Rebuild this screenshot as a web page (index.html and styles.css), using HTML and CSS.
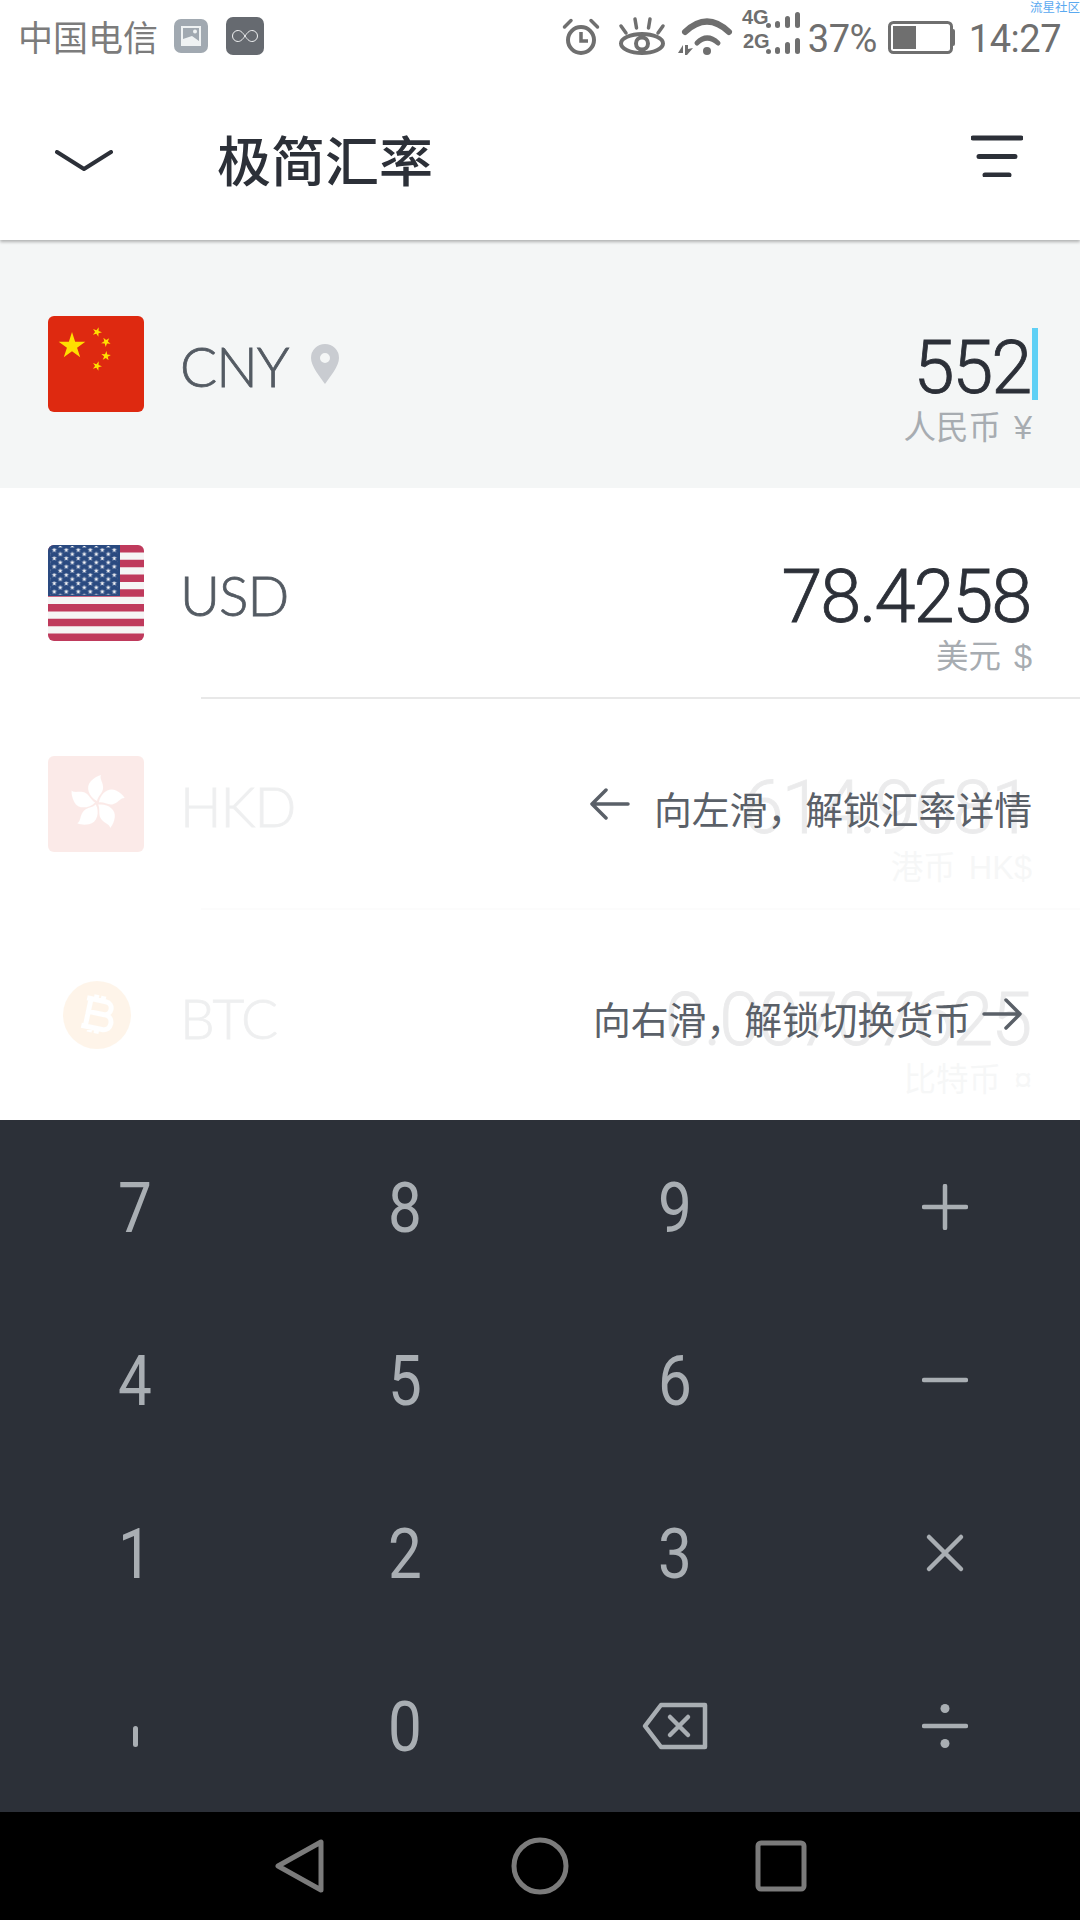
FILE: index.html
```html
<!DOCTYPE html>
<html lang="zh-CN">
<head>
  <meta charset="UTF-8">
  <meta name="viewport" content="width=device-width, initial-scale=1.0">
  <title>极简汇率</title>
  <link rel="stylesheet" href="styles.css">
</head>
<body>

<div class="screen">
  <header class="top">
    <div class="statusbar">
      <span class="carrier">中国电信</span>
      <span class="note note-pic">
        <svg width="22" height="22" viewBox="0 0 22 22"><path d="M1 1h20v20H1z" fill="#eff2f3"/><path d="M3 3h16v13L12 11 3 14z" fill="#a1a9b1"/><circle cx="15" cy="6.5" r="2" fill="#eff2f3"/></svg>
      </span>
      <span class="note note-inf">
        <svg width="26" height="14" viewBox="0 0 26 14"><path d="M13 7C10 2.5 8 1.5 6 1.5a5.5 5.5 0 0 0 0 11c2 0 4-1 7-5.500s5-5.500 7-5.500a5.500 5.500 0 0 1 0 11c-2 0-4-1-7-5.500z" fill="none" stroke="#f2f3f4" stroke-width="1"/></svg>
      </span>

      <div class="status-right">
        <svg class="ic-alarm" width="36" height="37" viewBox="0 0 36 37" fill="none" stroke="#6f6f6f" stroke-width="4"><circle cx="18" cy="22" r="13"/><path d="M18 14v9h7" stroke-width="3.500"/><path d="M1.500 9 8 2.500M34.500 9 28 2.500" stroke-width="3.500" stroke-linecap="round"/></svg>
        <svg class="ic-eye" width="46" height="37" viewBox="0 0 46 37" fill="none" stroke="#6f6f6f" stroke-width="4"><ellipse cx="23" cy="25.500" rx="21" ry="9.500"/><circle cx="23" cy="25.500" r="6"/><path d="M2 8l5 7M16 1l1.500 9M31 1l-1.500 9M44 8l-5 7" stroke-width="3.500" stroke-linecap="round"/></svg>
        <svg class="ic-wifi" width="54" height="37" viewBox="0 0 54 37" fill="none" stroke="#6f6f6f" stroke-linecap="round"><path d="M7 14Q29-7 51 14" stroke-width="6"/><path d="M19 25Q29 15 40 25" stroke-width="5"/><circle cx="29" cy="33" r="4" fill="#6f6f6f" stroke="none"/><path d="M0 35l5-8v8zM7 27h3v4l5-1-6 7h-2z" fill="#6f6f6f" stroke="none"/></svg>
        <svg class="ic-net" width="60" height="48" viewBox="0 0 60 48" fill="#6f6f6f">
          <text x="0" y="16" class="net-label">4G</text>
          <text x="1" y="40" class="net-label">2G</text>
          <rect x="24" y="15" width="5" height="5" rx="2.500"/><rect x="33" y="13" width="5" height="7" rx="2.500"/><rect x="43" y="8" width="5" height="12" rx="2.500"/><rect x="53" y="4" width="5" height="16" rx="2.500"/>
          <rect x="24" y="41" width="5" height="5" rx="2.500"/><rect x="33" y="39" width="5" height="7" rx="2.500"/><rect x="43" y="34" width="5" height="12" rx="2.500"/><rect x="53" y="30" width="5" height="16" rx="2.500"/>
        </svg>
        <span class="pct">37%</span>
        <svg class="ic-batt" width="67" height="33" viewBox="0 0 67 33"><rect x="1.500" y="1.500" width="62" height="30" rx="4" fill="none" stroke="#6f6f6f" stroke-width="3"/><rect x="5" y="5" width="23" height="23" fill="#6f6f6f"/><path d="M64 8h1a2 2 0 0 1 2 2v13a2 2 0 0 1-2 2h-1z" fill="#6f6f6f"/></svg>
        <span class="clock">14:27</span>
      </div>
      <span class="watermark">流星社区</span>
    </div>

    <div class="toolbar">
      <svg class="ic-chevron" width="58" height="22" viewBox="0 0 58 22" fill="none" stroke="#2c3038" stroke-width="4" stroke-linecap="round" stroke-linejoin="round"><path d="M2 2l27 17L56 2"/></svg>
      <h1 class="title">极简汇率</h1>
      <svg class="ic-filter" width="52" height="42" viewBox="0 0 52 42" fill="none" stroke="#2c3038" stroke-width="5" stroke-linecap="round"><path d="M2 3h48M8 21.500h36M14 40h24"/></svg>
    </div>
  </header>

  <main class="list">
    <section class="row row-active">
      <svg class="flag" width="96" height="96" viewBox="0 0 96 96">
        <rect width="96" height="96" fill="#de2910"/>
        <defs><polygon id="star" points="0,-1 .225,-.309 .951,-.309 .363,.118 .588,.809 0,.382 -.588,.809 -.363,.118 -.951,-.309 -.225,-.309"/></defs>
        <g fill="#ffde00">
          <use href="#star" transform="translate(24 30) scale(14)"/>
          <use href="#star" transform="translate(49 16) rotate(20) scale(5)"/>
          <use href="#star" transform="translate(58 26) rotate(40) scale(5)"/>
          <use href="#star" transform="translate(58 40) rotate(5) scale(5)"/>
          <use href="#star" transform="translate(49 50) rotate(20) scale(5)"/>
        </g>
      </svg>
      <span class="code">CNY</span>
      <svg class="ic-pin" width="28" height="40" viewBox="0 0 28 40"><path fill-rule="evenodd" d="M14 0a14 14 0 0 1 14 14c0 8-9 19-14 26C9 33 0 22 0 14A14 14 0 0 1 14 0zm0 9a5 5 0 1 0 0 10 5 5 0 0 0 0-10z" fill="#c9ccd1"/></svg>
      <div class="amount">
        <div class="value">552<span class="caret"></span></div>
        <div class="name">人民币 ¥</div>
      </div>
    </section>

    <section class="row row-usd">
      <svg class="flag" width="96" height="96" viewBox="0 0 96 96">
        <defs>
          <pattern id="stars" x="3.300" y="2.900" width="12" height="8.340" patternUnits="userSpaceOnUse">
            <polygon fill="#f4f4f6" transform="translate(3 2.100) scale(2.800)" points="0,-1 .225,-.309 .951,-.309 .363,.118 .588,.809 0,.382 -.588,.809 -.363,.118 -.951,-.309 -.225,-.309"/>
            <polygon fill="#f4f4f6" transform="translate(9 6.270) scale(2.800)" points="0,-1 .225,-.309 .951,-.309 .363,.118 .588,.809 0,.382 -.588,.809 -.363,.118 -.951,-.309 -.225,-.309"/>
          </pattern>
        </defs>
        <rect width="96" height="96" fill="#f5f5f5"/>
        <path d="M0 0h96v7.400H0zM0 14.800h96v7.400H0zM0 29.500h96v7.400H0zM0 44.300h96v7.400H0zM0 59.100h96v7.400H0zM0 73.800h96v7.400H0zM0 88.600h96V96H0z" fill="#bf3a5c"/>
        <rect width="72" height="51" fill="#2a4a80"/>
        <rect x="2" y="1" width="68" height="49" fill="url(#stars)"/>
      </svg>
      <span class="code">USD</span>
      <div class="amount">
        <div class="value">78.4258</div>
        <div class="name">美元 $</div>
      </div>
    </section>

    <section class="row row-hkd">
      <div class="fade">
        <svg class="flag" width="96" height="96" viewBox="0 0 96 96">
          <rect width="96" height="96" fill="#de2910"/>
          <defs><path id="petal" d="M0-2C-8-6-12-16-6-22-3-25 0-27 4-28 2-24 7-20 6-14 5-9 1-7 0-2z"/></defs>
          <g fill="#fff" transform="translate(49 47)">
            <use href="#petal"/>
            <use href="#petal" transform="rotate(72)"/>
            <use href="#petal" transform="rotate(144)"/>
            <use href="#petal" transform="rotate(216)"/>
            <use href="#petal" transform="rotate(288)"/>
          </g>
        </svg>
        <span class="code">HKD</span>
        <div class="amount">
          <div class="value">614.9681</div>
          <div class="name">港币 HK$</div>
        </div>
      </div>
      <div class="hint hint-left">
        <svg width="40" height="32" viewBox="0 0 40 32" fill="none" stroke="#5a6068" stroke-width="3.500" stroke-linecap="round" stroke-linejoin="round"><path d="M38 16H3M16 2 2 16l14 14"/></svg>
        <span>向左滑，解锁汇率详情</span>
      </div>
      <div class="row-line"></div>
    </section>

    <section class="row row-btc">
      <div class="fade">
        <svg class="flag" width="96" height="96" viewBox="0 0 96 96">
          <circle cx="49" cy="47" r="34" fill="#f7931a"/>
          <path d="M40 32h15c9 0 9 13 0 13H40zM40 45h17c10 0 10 15 0 15H40zM36 32h6M36 60h6M45 27v5M52 27v5M45 60v5M52 60v5" fill="none" stroke="#fff" stroke-width="5" transform="rotate(12 48 46)"/>
        </svg>
        <span class="code">BTC</span>
        <div class="amount">
          <div class="value">0.00707625</div>
          <div class="name">比特币 ¤</div>
        </div>
      </div>
      <div class="hint hint-right">
        <span>向右滑，解锁切换货币</span>
        <svg width="40" height="32" viewBox="0 0 40 32" fill="none" stroke="#5a6068" stroke-width="3.500" stroke-linecap="round" stroke-linejoin="round"><path d="M2 16h35M24 2l14 14-14 14"/></svg>
      </div>
    </section>
  </main>

  <div class="keypad">
    <button class="key num">7</button>
    <button class="key num">8</button>
    <button class="key num">9</button>
    <button class="key"><svg width="46" height="46" viewBox="0 0 46 46" class="op"><path d="M2 23h42M23 2v42"/></svg></button>
    <button class="key num">4</button>
    <button class="key num">5</button>
    <button class="key num">6</button>
    <button class="key"><svg width="46" height="46" viewBox="0 0 46 46" class="op"><path d="M2 23h42"/></svg></button>
    <button class="key num">1</button>
    <button class="key num">2</button>
    <button class="key num">3</button>
    <button class="key"><svg width="46" height="46" viewBox="0 0 46 46" class="op"><path d="M7 7l32 32M39 7 7 39"/></svg></button>
    <button class="key"><span class="sep"></span></button>
    <button class="key num">0</button>
    <button class="key"><svg width="66" height="48" viewBox="0 0 66 48" class="op"><path d="M19 3h44v42H19L3 24z" stroke-linejoin="round"/><path d="M28 15l18 18M46 15 28 33"/></svg></button>
    <button class="key"><svg width="46" height="50" viewBox="0 0 46 50" class="op"><path d="M2 25h42"/><circle cx="23" cy="7.500" r="4.500" class="op-dot"/><circle cx="23" cy="42.500" r="4.500" class="op-dot"/></svg></button>
  </div>

  <nav class="navbar">
    <svg width="50" height="56" viewBox="0 0 50 56" class="nav-ic"><path d="M46 4v48L3 28z" stroke-linejoin="round"/></svg>
    <svg width="58" height="58" viewBox="0 0 58 58" class="nav-ic"><circle cx="29" cy="29" r="26"/></svg>
    <svg width="52" height="52" viewBox="0 0 52 52" class="nav-ic"><rect x="3" y="3" width="46" height="46" rx="3"/></svg>
  </nav>
</div>

</body>
</html>
```

FILE: styles.css
```css
:root {
  --ink: #2c3038;
  --code: #545b63;
  --muted: #a7acb1;
  --status: #6f6f6f;
  --key: #a9aeb3;
}
* { box-sizing: border-box; }
html, body {
  margin: 0;
  padding: 0;
  background: #fff;
}
body {
  font-family: "Noto Sans CJK SC", "Noto Sans", sans-serif;
  color: var(--ink);
}
.screen {
  width: 1080px;
  height: 1920px;
  display: flex;
  flex-direction: column;
  overflow: hidden;
}

/* status bar + toolbar */
.top {
  height: 240px;
  background: #fff;
  box-shadow: 0 2px 3px rgba(0,0,0,0.28);
  position: relative;
  z-index: 2;
}
.statusbar {
  height: 72px;
  padding: 0 19px 0 18px;
  display: flex;
  align-items: center;
  position: relative;
}
.carrier {
  font-size: 35px;
  line-height: 72px;
  color: #7c7c7c;
  width: 140px;
  white-space: nowrap;
}
.note {
  display: flex;
  align-items: center;
  justify-content: center;
}
.note-pic {
  width: 34px;
  height: 34px;
  margin-left: 16px;
  border-radius: 7px;
  background: #a1a9b1;
}
.note-inf {
  width: 38px;
  height: 38px;
  margin-left: 18px;
  border-radius: 7px;
  background: #666a70;
}
.status-right {
  margin-left: auto;
  display: flex;
  align-items: center;
  height: 72px;
}
.status-right svg { display: block; overflow: visible; }
.ic-eye { margin-left: 20px; }
.ic-wifi { margin-left: 13px; }
.ic-net { margin-left: 10px; margin-top: -8px; }
.ic-batt { margin-left: 11px; margin-top: 3px; }
.net-label {
  font-family: "Liberation Sans", sans-serif;
  font-size: 20px;
  font-weight: 700;
}
.pct, .clock {
  font-family: "Roboto", sans-serif;
  font-weight: 400;
  font-size: 38px;
  line-height: 72px;
  letter-spacing: -0.500px;
  color: var(--status);
  margin-top: 6px;
}
.pct { margin-left: 6px; }
.clock { margin-left: 14px; }
.watermark {
  position: absolute;
  top: 0;
  right: 0;
  font-size: 12.500px;
  line-height: 14px;
  color: #5aa9f0;
}
.toolbar {
  height: 168px;
  display: flex;
  align-items: center;
}
.ic-chevron { margin-left: 55px; margin-top: 9px; }
.title {
  margin: 5px 0 0 104px;
  font-size: 54px;
  font-weight: 500;
  line-height: 72px;
  color: var(--ink);
}
.ic-filter { margin-left: auto; margin-right: 57px; }

/* currency list */
.list {
  height: 880px;
  background: #fff;
}
.row, .fade {
  display: flex;
  align-items: flex-start;
}
.row {
  padding: 57px 50px 0 48px;
  position: relative;
}
.row-active {
  height: 248px;
  padding-top: 76px;
  background: #f4f6f6;
}
.row-usd { height: 211px; }
.row-hkd { height: 210px; }
.row-btc { height: 211px; padding-top: 59px; }
.row-usd::after {
  content: "";
  position: absolute;
  left: 201px;
  right: 0;
  bottom: 0;
  height: 2px;
  background: #e8e8e8;
}
.fade {
  width: 100%;
  opacity: 0.09;
}
.flag {
  display: block;
  flex: none;
  border-radius: 6px;
}
.code {
  margin: 17px 0 0 36px;
  font-family: "Lato", sans-serif;
  font-weight: 300;
  font-size: 55px;
  line-height: 66px;
  letter-spacing: -1px;
  -webkit-text-stroke: 0.800px var(--code);
  color: var(--code);
}
.ic-pin { margin: 28px 0 0 23px; }
.amount {
  margin-left: auto;
  text-align: right;
}
.value {
  position: relative;
  font-family: "Roboto", sans-serif;
  font-weight: 300;
  font-size: 74px;
  line-height: 80px;
  letter-spacing: -2.200px;
  -webkit-text-stroke: 0.800px var(--ink);
  color: var(--ink);
  margin-top: 12px;
}
.caret {
  position: absolute;
  top: 0;
  right: -8px;
  width: 6px;
  height: 72px;
  background: #5fd0f5;
}
.name {
  margin-right: -2px;
  font-family: "Liberation Sans", "Noto Sans CJK SC", sans-serif;
  font-size: 32.500px;
  line-height: 40px;
  word-spacing: 4px;
  color: var(--muted);
}
.row-line {
  position: absolute;
  left: 201px;
  right: 0;
  bottom: -1px;
  height: 2px;
  background: #fcfcfc;
}
.hint {
  position: absolute;
  right: 58px;
  top: 84px;
  display: flex;
  align-items: center;
  font-size: 37.800px;
  line-height: 50px;
  color: #5a6068;
  white-space: nowrap;
}
.hint-left { right: 48px; }
.hint-left svg { margin-right: 24px; margin-top: -8px; }
.hint-right svg { margin-left: 11px; margin-top: -8px; }

/* keypad */
.keypad {
  height: 692px;
  background: var(--ink);
  display: grid;
  grid-template-columns: repeat(4, 270px);
  grid-template-rows: repeat(4, 173px);
}
.key {
  display: flex;
  align-items: center;
  justify-content: center;
  padding: 0;
  border: none;
  background: none;
  font-family: "Roboto", sans-serif;
  font-weight: 400;
  font-size: 70px;
  color: var(--key);
}
.num {
  padding-top: 2px;
  transform: scaleX(0.86);
}
.op {
  fill: none;
  stroke: var(--key);
  stroke-width: 4.500;
  stroke-linecap: round;
}
.op-dot {
  fill: var(--key);
  stroke: none;
}
.sep {
  width: 5px;
  height: 21px;
  margin-top: 22px;
  border-radius: 3px;
  background: var(--key);
}

/* android nav buttons */
.navbar {
  height: 108px;
  background: #000;
  display: flex;
  align-items: center;
  padding-left: 275px;
  gap: 186px;
}
.nav-ic {
  fill: none;
  stroke: #7b7b7b;
  stroke-width: 5;
}
```
